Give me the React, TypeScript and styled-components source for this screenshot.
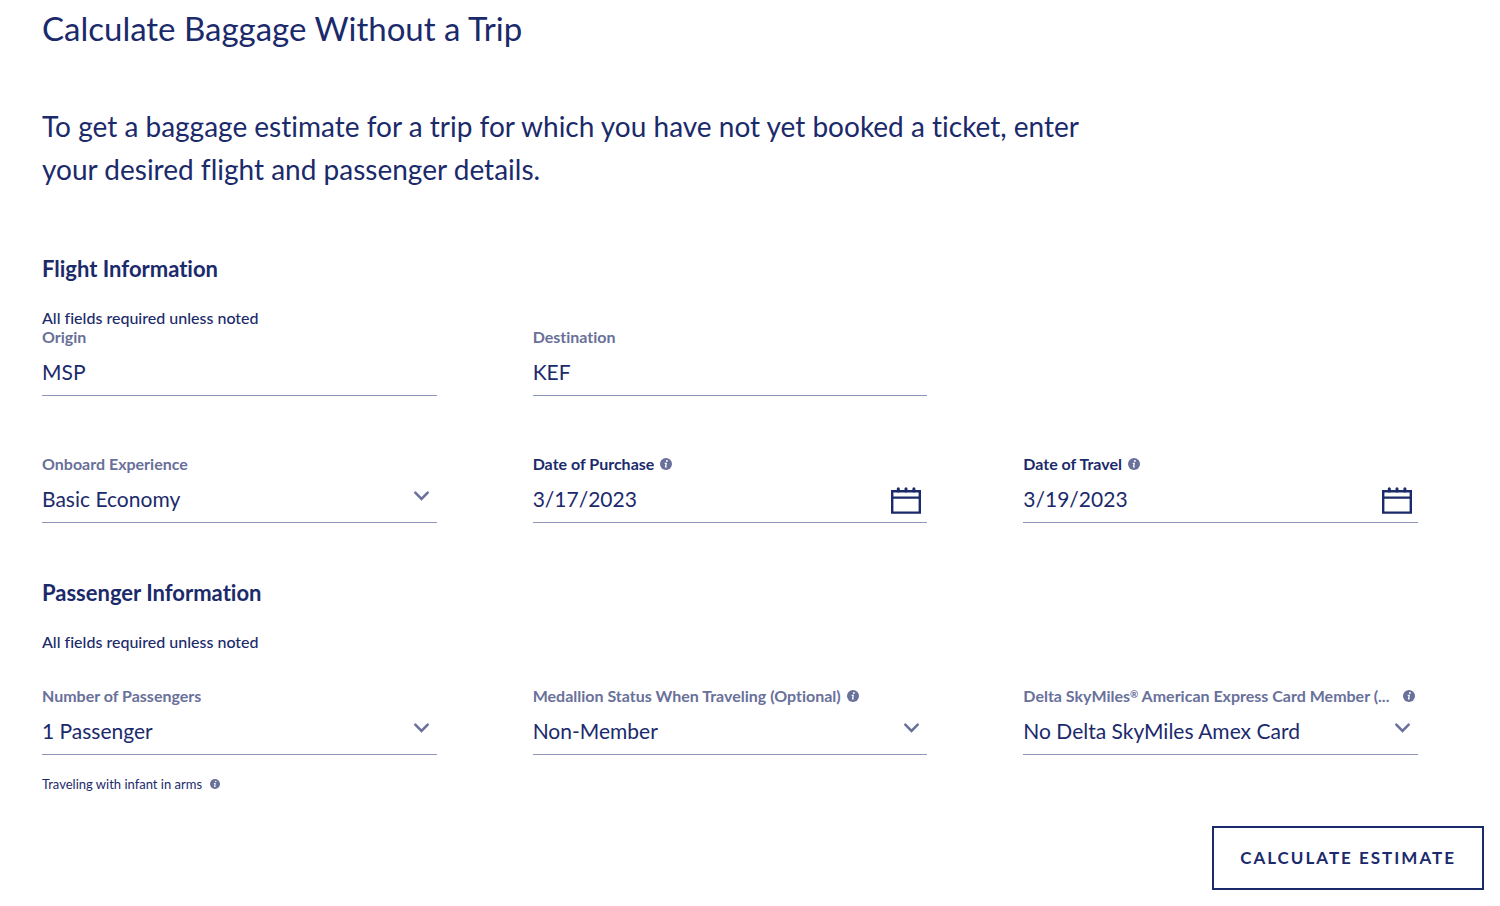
import React, { ReactNode, useId } from "react";
import styled, { createGlobalStyle } from "styled-components";

const navy = "#1b2a6b";
const slate = "#69709a";
const rule = "#8e95bb";

const GlobalStyle = createGlobalStyle`
  *, *::before, *::after { box-sizing: border-box; }
  body {
    margin: 0;
    background: #ffffff;
    color: ${navy};
    font-family: Lato, "Open Sans", sans-serif;
    font-variant-ligatures: no-common-ligatures;
  }
`;

const Page = styled.main`
  padding: 7px 16px 16px 42px;
`;

const Title = styled.h1`
  margin: 0;
  font-size: 33px;
  line-height: 42px;
  font-weight: 400;
`;

const Intro = styled.p`
  margin: 56px 0 0;
  max-width: 1060px;
  font-size: 28px;
  line-height: 43px;
  font-weight: 400;
`;

const Section = styled.section`
  padding-right: 66px;
`;

const SectionTitle = styled.h2<{ $gap: number }>`
  margin: ${(p) => p.$gap}px 0 0;
  font-size: 22px;
  line-height: 28px;
  font-weight: 700;
`;

const Note = styled.p`
  margin: 25px 0 0;
  font-size: 16px;
  line-height: 20px;
  font-weight: 500;
`;

const FieldRow = styled.div<{ $gap?: number }>`
  display: grid;
  grid-template-columns: repeat(3, minmax(0, 1fr));
  column-gap: 96px;
  margin-top: ${(p) => p.$gap ?? 0}px;
`;

const LabelLine = styled.div<{ $spread?: boolean }>`
  display: flex;
  align-items: center;
  justify-content: ${(p) => (p.$spread ? "space-between" : "flex-start")};
  gap: 6px;
  padding-right: 3px;
  height: 18px;
`;

const Label = styled.label<{ $strong?: boolean }>`
  min-width: 0;
  overflow: hidden;
  white-space: nowrap;
  text-overflow: ellipsis;
  color: ${(p) => (p.$strong ? navy : slate)};
  font-size: 16px;
  line-height: 18px;
  font-weight: 700;
`;

const Registered = styled.sup`
  font-size: 10px;
  line-height: 10px;
  vertical-align: 4px;
`;

const Control = styled.div`
  position: relative;
  display: flex;
  align-items: center;
  height: 50px;
  padding-top: 2px;
  border-bottom: 1px solid ${rule};
`;

const TextInput = styled.input`
  flex: 1;
  min-width: 0;
  height: 32px;
  padding: 0;
  border: 0;
  background: transparent;
  color: ${navy};
  font: 400 21px/32px Lato, "Open Sans", sans-serif;
`;

const SelectBox = styled.select`
  appearance: none;
  flex: 1;
  min-width: 0;
  height: 32px;
  padding: 0 32px 0 0;
  border: 0;
  background: transparent;
  color: ${navy};
  font: 400 21px/32px Lato, "Open Sans", sans-serif;
`;

const ChevronIcon = styled.svg`
  position: absolute;
  right: 7px;
  top: 17px;
  pointer-events: none;
`;

const IconButton = styled.button`
  display: flex;
  margin: 4px 5px 0 0;
  padding: 0;
  border: 0;
  background: none;
  color: ${navy};
  cursor: pointer;
`;

const InfoButton = styled.button`
  display: flex;
  flex: none;
  padding: 0;
  border: 0;
  background: none;
  color: ${slate};
  cursor: pointer;
`;

const InfantLine = styled.div`
  display: flex;
  align-items: center;
  gap: 8px;
  margin-top: 19px;
  font-size: 13px;
  line-height: 20px;
`;

const Actions = styled.div`
  display: flex;
  justify-content: flex-end;
  margin-top: 32px;
`;

const SubmitButton = styled.button`
  height: 64px;
  padding: 0 26px;
  border: 2px solid ${navy};
  background: #ffffff;
  color: ${navy};
  font: 700 17px/24px Lato, "Open Sans", sans-serif;
  letter-spacing: 2px;
  text-transform: uppercase;
  cursor: pointer;
`;

function Info({ about, size = 12 }: { about: string; size?: number }) {
  return (
    <InfoButton type="button" aria-label={`More about ${about}`}>
      <svg width={size} height={size} viewBox="0 0 12 12" aria-hidden="true">
        <circle cx="6" cy="6" r="6" fill="currentColor" />
        <circle cx="6.9" cy="3" r="0.95" fill="#fff" />
        <path d="M4.7 5.3h1.6L5.5 8.9h1.2" fill="none" stroke="#fff" strokeWidth="1.3" strokeLinejoin="round" />
      </svg>
    </InfoButton>
  );
}

function Calendar() {
  return (
    <svg width="32" height="27" viewBox="0 0 32 27" aria-hidden="true">
      <path
        d="M2.2 4.2h27.6v21.4H2.2zM2.2 10.6h27.6"
        fill="none"
        stroke="currentColor"
        strokeWidth="2.4"
      />
      <path d="M8.3 4V1.8M16 4V1.8M23.9 4V1.8" stroke="currentColor" strokeWidth="3" strokeLinecap="round" />
    </svg>
  );
}

type FieldProps = {
  label: ReactNode;
  name: string;
  value: string;
  kind?: "text" | "select" | "date";
  strong?: boolean;
  info?: boolean;
  spread?: boolean;
};

function Field({ label, name, value, kind = "text", strong, info, spread }: FieldProps) {
  const id = useId();
  return (
    <div>
      <LabelLine $spread={spread}>
        <Label htmlFor={id} $strong={strong}>
          {label}
        </Label>
        {info && <Info about={name} />}
      </LabelLine>
      <Control>
        {kind === "select" ? (
          <>
            <SelectBox id={id} defaultValue={value}>
              <option>{value}</option>
            </SelectBox>
            <ChevronIcon width="17" height="12" viewBox="0 0 17 12" aria-hidden="true">
              <path d="M2.3 2.6l6.2 6.3 6.2-6.3" fill="none" stroke={slate} strokeWidth="2.5" strokeLinecap="round" />
            </ChevronIcon>
          </>
        ) : (
          <TextInput id={id} type="text" defaultValue={value} />
        )}
        {kind === "date" && (
          <IconButton type="button" aria-label={`Choose ${name}`}>
            <Calendar />
          </IconButton>
        )}
      </Control>
    </div>
  );
}

export default function App() {
  return (
    <>
      <GlobalStyle />
      <Page>
        <Title>Calculate Baggage Without a Trip</Title>
        <Intro>
          To get a baggage estimate for a trip for which you have not yet booked a ticket, enter your desired flight
          and passenger details.
        </Intro>
        <form onSubmit={(e) => e.preventDefault()}>
          <Section>
            <SectionTitle $gap={64}>Flight Information</SectionTitle>
            <Note>All fields required unless noted</Note>
            <FieldRow>
              <Field label="Origin" name="origin" value="MSP" />
              <Field label="Destination" name="destination" value="KEF" />
            </FieldRow>
            <FieldRow $gap={59}>
              <Field label="Onboard Experience" name="onboard experience" value="Basic Economy" kind="select" />
              <Field label="Date of Purchase" name="date of purchase" value="3/17/2023" kind="date" strong info />
              <Field label="Date of Travel" name="date of travel" value="3/19/2023" kind="date" strong info />
            </FieldRow>
          </Section>
          <Section>
            <SectionTitle $gap={56}>Passenger Information</SectionTitle>
            <Note>All fields required unless noted</Note>
            <FieldRow $gap={35}>
              <Field label="Number of Passengers" name="number of passengers" value="1 Passenger" kind="select" />
              <Field
                label="Medallion Status When Traveling (Optional)"
                name="medallion status"
                value="Non-Member"
                kind="select"
                info
              />
              <Field
                label={
                  <>
                    Delta SkyMiles<Registered>®</Registered> American Express Card Member (...
                  </>
                }
                name="card membership"
                value="No Delta SkyMiles Amex Card"
                kind="select"
                info
                spread
              />
            </FieldRow>
            <InfantLine>
              <span>Traveling with infant in arms</span>
              <Info about="traveling with infant in arms" size={10} />
            </InfantLine>
          </Section>
          <Actions>
            <SubmitButton type="submit">Calculate Estimate</SubmitButton>
          </Actions>
        </form>
      </Page>
    </>
  );
}
